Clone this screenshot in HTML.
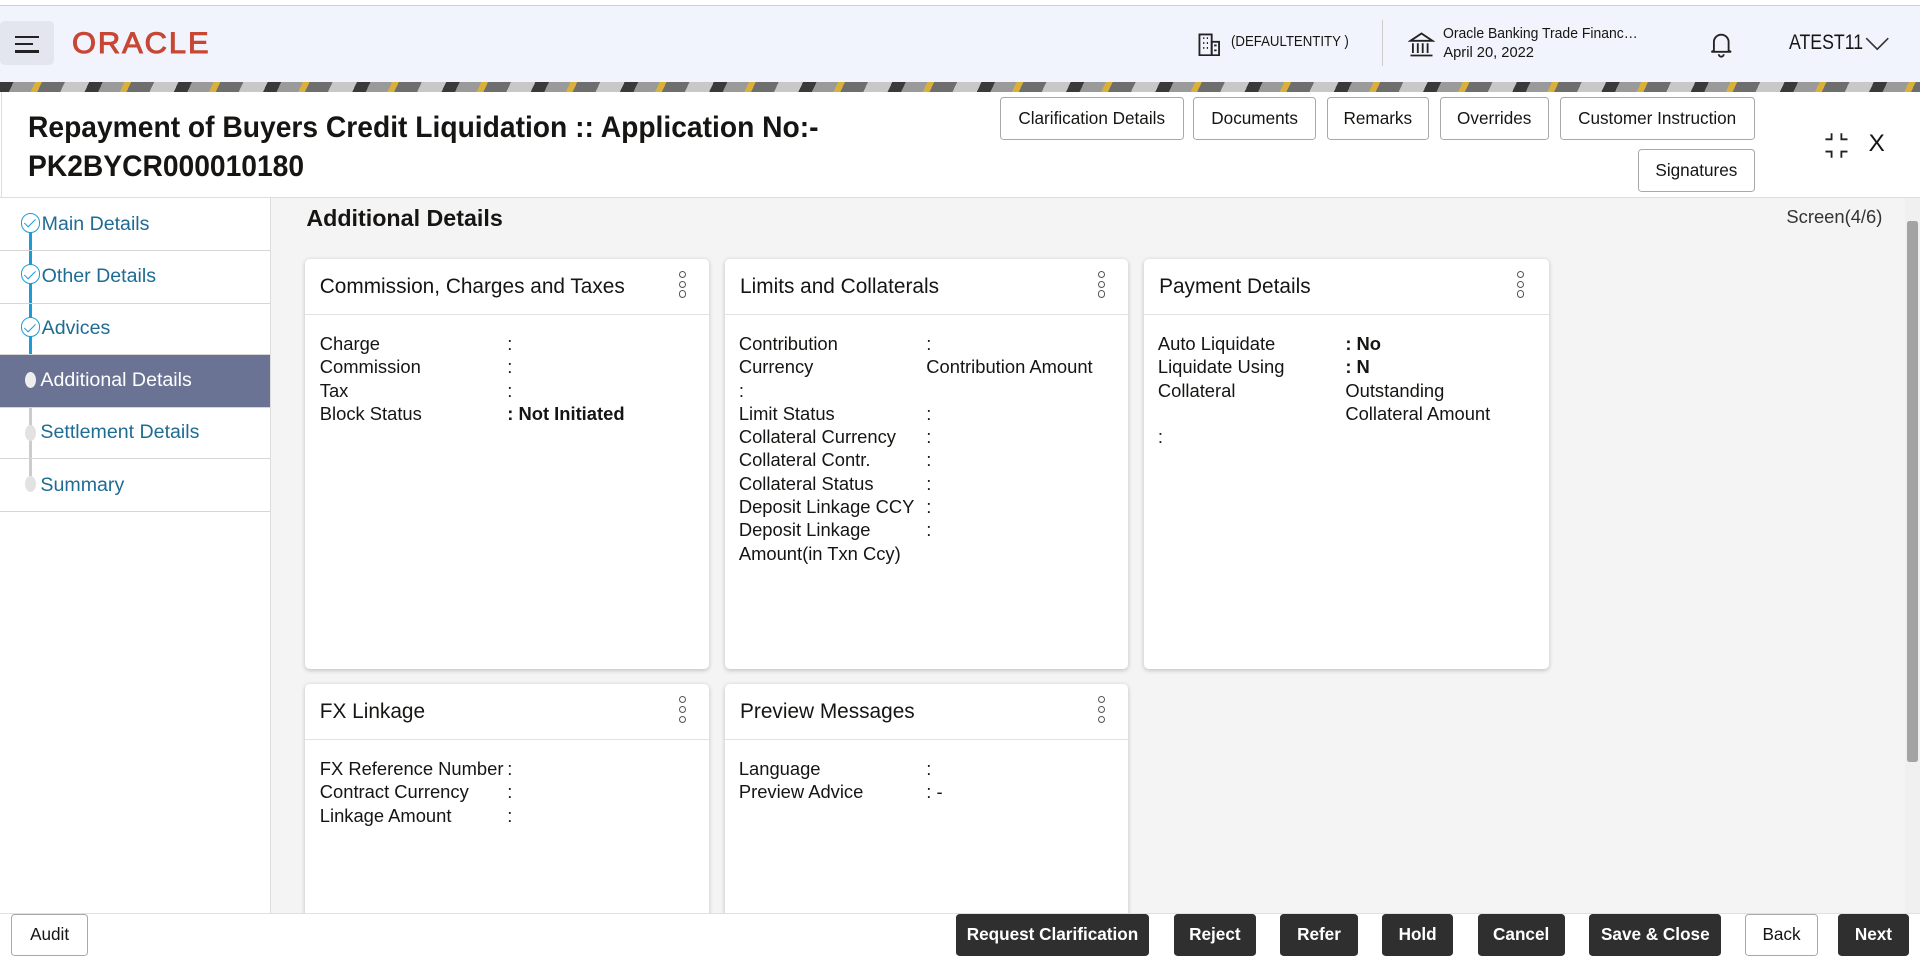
<!DOCTYPE html>
<html><head><meta charset="utf-8">
<style>
html{zoom:1.22526}
*{box-sizing:border-box;margin:0;padding:0}
body{width:1567px;height:781px;overflow:hidden;position:relative;font-family:"Liberation Sans",sans-serif;color:#161513;background:#fff}
.abs{position:absolute}
.hdr{left:0;top:4px;width:1567px;height:63px;background:#f1f4fc;border-top:1px solid #cfcfcf}
.band{left:0;top:67px;width:1567px;height:8px;background:repeating-linear-gradient(115deg,#3a3a3a 0 10px,#9a9a9a 10px 26px,#d9b13a 26px 31px,#6e6e6e 31px 48px,#c8c8c8 48px 66px)}
.panel{left:1px;top:75px;width:1566px;height:706px;background:#fff;border-left:1px solid #ddd}
.btn{position:absolute;top:79px;height:35px;border:1px solid #a8a8a8;border-radius:3px;background:#fff;font-size:14px;display:flex;align-items:center;justify-content:center;color:#161513}
.side{left:0;top:161px;width:221px;height:584px;background:#fff;border-right:1px solid #ddd;border-top:1px solid #ddd}
.item{position:absolute;left:0;width:220px;height:43px;border-bottom:1px solid #d6d6d6;font-size:16px;color:#1e6b94;display:flex;align-items:center;padding-left:34px}
.content{left:221px;top:162px;width:1334px;height:583px;background:#f4f4f4}
.card{position:absolute;background:#fff;border-radius:4px;box-shadow:0 1px 4px rgba(0,0,0,.22)}
.card h3{font-weight:normal;font-size:17px;height:46px;line-height:46px;padding-left:12px;border-bottom:1px solid #e2e2e2}
.keb{position:absolute;top:10px;width:8px}
.keb i{display:block;width:6px;height:6px;border:1px solid #555;border-radius:50%;margin-bottom:2px}
.row{position:absolute;font-size:15px;line-height:19px}
.fb{position:absolute;top:746px;height:34px;background:#2f2f2f;color:#fff;font-weight:bold;font-size:14px;border-radius:3px;display:flex;align-items:center;justify-content:center}
.chk{position:absolute;left:17px;width:16px;height:16px;border:1px solid #1e9bd7;border-radius:50%;background:#fff}
.chk::after{content:"";position:absolute;left:4px;top:2px;width:4px;height:8px;border:solid #1e9bd7;border-width:0 1px 1px 0;transform:rotate(45deg)}
</style></head><body>
<div class="abs hdr"></div>
<div class="abs" style="left:0;top:17px;width:44px;height:36px;background:#e3e6ee;border-radius:4px"></div>
<div class="abs" style="left:12px;top:29px;width:20px;height:2px;background:#222"></div>
<div class="abs" style="left:12px;top:35px;width:15px;height:2px;background:#222"></div>
<div class="abs" style="left:12px;top:41px;width:20px;height:2px;background:#222"></div>
<div class="abs" style="left:59px;top:22px;font-size:24px;color:#c74634;letter-spacing:1.5px;-webkit-text-stroke:0.8px #c74634;transform:scaleX(1.05);transform-origin:left">ORACLE</div>
<svg class="abs" style="left:977px;top:26px" width="20" height="20" viewBox="0 0 20 20" fill="none" stroke="#222" stroke-width="1.5"><rect x="2" y="2" width="10" height="17"/><rect x="12" y="8" width="6" height="11"/><path d="M5 5h1M8 5h1M5 9h1M8 9h1M5 13h1M8 13h1M14 11h2M14 15h2"/></svg>
<div class="abs" style="left:1005px;top:28px;font-size:12px;transform:scaleX(.9);transform-origin:left">(DEFAULTENTITY )</div>
<div class="abs" style="left:1128px;top:16px;width:1px;height:38px;background:#ccc"></div>
<svg class="abs" style="left:1149px;top:25px" width="22" height="22" viewBox="0 0 22 22" fill="none" stroke="#222" stroke-width="1.5"><path d="M2 8L11 2l9 6zM4 10v8M8 10v8M12 10v8M16 10v8M2 20h18"/></svg>
<div class="abs" style="left:1178px;top:21px;font-size:12px;transform:scaleX(.95);transform-origin:left">Oracle Banking Trade Financ…</div>
<div class="abs" style="left:1178px;top:37px;font-size:12px">April 20, 2022</div>
<svg class="abs" style="left:1395px;top:25px" width="20" height="22" viewBox="0 0 20 22" fill="none" stroke="#222" stroke-width="1.5"><path d="M4 16V9a6 6 0 0112 0v7l2 1H2zM8 19a2 2 0 004 0"/></svg>
<div class="abs" style="left:1460px;top:25px;font-size:17px;transform:scaleX(.85);transform-origin:left">ATEST11</div>
<svg class="abs" style="left:1522px;top:30px" width="20" height="12" viewBox="0 0 20 12" fill="none" stroke="#333" stroke-width="1.3"><path d="M1 1l9 9 9-9"/></svg>
<div class="abs band"></div>
<div class="abs panel"></div>
<div class="abs" style="left:23px;top:88px;font-size:24px;font-weight:bold;line-height:32px;transform:scaleX(.96);transform-origin:left">Repayment of Buyers Credit Liquidation :: Application No:-<br>PK2BYCR000010180</div>
<div class="btn" style="left:816px;width:150px">Clarification Details</div>
<div class="btn" style="left:974px;width:100px">Documents</div>
<div class="btn" style="left:1083px;width:83px">Remarks</div>
<div class="btn" style="left:1175px;width:89px">Overrides</div>
<div class="btn" style="left:1273px;width:159px">Customer Instruction</div>
<div class="btn" style="left:1337px;top:122px;width:95px">Signatures</div>
<svg class="abs" style="left:1488px;top:108px" width="22" height="22" viewBox="0 0 22 22" fill="none" stroke="#222" stroke-width="1.5"><path d="M7 1v5H2M15 1v5h5M7 21v-5H2M15 21v-5h5"/></svg>
<div class="abs" style="left:1525px;top:106px;font-size:20px">X</div>
<div class="abs" style="left:1px;top:161px;width:1566px;height:1px;background:#ddd"></div>
<div class="abs side">
<div style="position:absolute;left:24px;top:14px;width:2px;height:150px;background:#1e9bd7"></div>
<div style="position:absolute;left:24px;top:168px;width:2px;height:70px;background:#ccc"></div>
<div class="item" style="top:0">Main Details</div>
<div class="item" style="top:43px">Other Details</div>
<div class="item" style="top:85px">Advices</div>
<div class="item" style="top:128px;background:#6b7394;color:#fff;padding-left:33px">Additional Details</div>
<div class="item" style="top:170px;padding-left:33px">Settlement Details</div>
<div class="item" style="top:213px;padding-left:33px">Summary</div>
<div class="chk" style="top:12px"></div>
<div class="chk" style="top:54px"></div>
<div class="chk" style="top:97px"></div>
<div style="position:absolute;left:20px;top:142px;width:9px;height:13px;border-radius:50%;background:#eee"></div>
<div style="position:absolute;left:20px;top:185px;width:9px;height:13px;border-radius:50%;background:#e2e2e2"></div>
<div style="position:absolute;left:20px;top:227px;width:9px;height:13px;border-radius:50%;background:#e2e2e2"></div>
</div>
<div class="abs content"></div>
<div class="abs" style="left:250px;top:167px;font-size:19px;font-weight:bold">Additional Details</div>
<div class="abs" style="left:1458px;top:168px;font-size:15px;color:#333">Screen(4/6)</div>
<div class="abs" style="left:1555px;top:162px;width:12px;height:583px;background:#f0f0f0"></div>
<div class="abs" style="left:1556px;top:180px;width:9px;height:442px;background:#a3a3a3;border-radius:2px"></div>

<div class="card" style="left:249px;top:211px;width:330px;height:335px"><h3>Commission, Charges and Taxes</h3><div class="keb" style="left:305px"><i></i><i></i><i></i></div></div>
<div class="card" style="left:592px;top:211px;width:329px;height:335px"><h3>Limits and Collaterals</h3><div class="keb" style="left:304px"><i></i><i></i><i></i></div></div>
<div class="card" style="left:934px;top:211px;width:330px;height:335px"><h3>Payment Details</h3><div class="keb" style="left:304px"><i></i><i></i><i></i></div></div>
<div class="card" style="left:249px;top:558px;width:330px;height:200px"><h3>FX Linkage</h3><div class="keb" style="left:305px"><i></i><i></i><i></i></div></div>
<div class="card" style="left:592px;top:558px;width:329px;height:200px"><h3>Preview Messages</h3><div class="keb" style="left:304px"><i></i><i></i><i></i></div></div>

<div class="row" style="left:261px;top:271px">Charge<br>Commission<br>Tax<br>Block Status</div>
<div class="row" style="left:414px;top:271px">:<br>:<br>:<br><b>: Not Initiated</b></div>
<div class="row" style="left:603px;top:271px">Contribution<br>Currency<br>:<br>Limit Status<br>Collateral Currency<br>Collateral Contr.<br>Collateral Status<br>Deposit Linkage CCY<br>Deposit Linkage<br>Amount(in Txn Ccy)</div>
<div class="row" style="left:756px;top:271px">:<br>Contribution Amount<br><br>:<br>:<br>:<br>:<br>:<br>:</div>
<div class="row" style="left:945px;top:271px">Auto Liquidate<br>Liquidate Using<br>Collateral<br><br>:</div>
<div class="row" style="left:1098px;top:271px"><b>: No</b><br><b>: N</b><br>Outstanding<br>Collateral Amount</div>
<div class="row" style="left:261px;top:618px">FX Reference Number<br>Contract Currency<br>Linkage Amount</div>
<div class="row" style="left:414px;top:618px">:<br>:<br>:</div>
<div class="row" style="left:603px;top:618px">Language<br>Preview Advice</div>
<div class="row" style="left:756px;top:618px">:<br>: -</div>

<div class="abs" style="left:0;top:745px;width:1567px;height:36px;background:#fff;border-top:1px solid #e0e0e0"></div>
<div class="fb" style="left:9px;width:63px;background:#fff;color:#161513;font-weight:normal;border:1px solid #a8a8a8">Audit</div>
<div class="fb" style="left:780px;width:158px">Request Clarification</div>
<div class="fb" style="left:958px;width:67px">Reject</div>
<div class="fb" style="left:1045px;width:63px">Refer</div>
<div class="fb" style="left:1128px;width:58px">Hold</div>
<div class="fb" style="left:1206px;width:71px">Cancel</div>
<div class="fb" style="left:1297px;width:108px">Save &amp; Close</div>
<div class="fb" style="left:1424px;width:60px;background:#fff;color:#161513;font-weight:normal;border:1px solid #a8a8a8">Back</div>
<div class="fb" style="left:1500px;width:58px">Next</div>
</body></html>
